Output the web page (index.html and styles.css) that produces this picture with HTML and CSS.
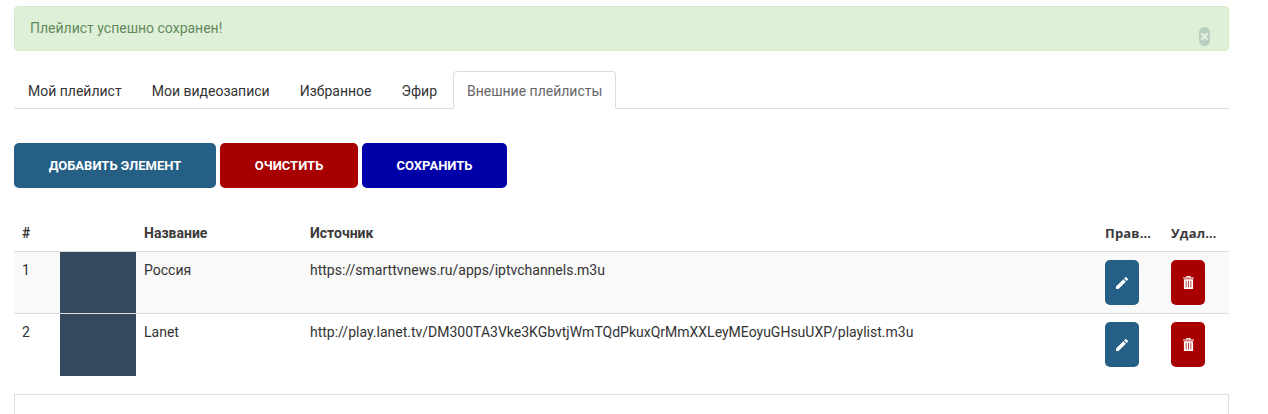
FILE: index.html
```html
<!DOCTYPE html>
<html>
<head>
  <meta charset="UTF-8">
  <title>Внешние плейлисты</title>
  <link rel="stylesheet" href="styles.css">
</head>
<body>
  <div class="container">
    <div class="alert">
      <span>Плейлист успешно сохранен!</span>
      <span class="alert-close">
        <svg viewBox="0 0 10 10" width="9" height="9"><path d="M1.5 1.5l7 7M8.5 1.5l-7 7" stroke="#e4f0e2" stroke-width="2.4"/></svg>
      </span>
    </div>

    <div class="tabs">
      <a class="tab">Мой плейлист</a>
      <a class="tab">Мои видеозаписи</a>
      <a class="tab">Избранное</a>
      <a class="tab">Эфир</a>
      <a class="tab active">Внешние плейлисты</a>
    </div>

    <div class="actions">
      <button class="btn btn-add">ДОБАВИТЬ ЭЛЕМЕНТ</button>
      <button class="btn btn-clear">ОЧИСТИТЬ</button>
      <button class="btn btn-save">СОХРАНИТЬ</button>
    </div>

    <table class="list">
      <colgroup>
        <col class="col-num">
        <col class="col-thumb">
        <col class="col-name">
        <col class="col-src">
        <col class="col-btn">
        <col class="col-btn">
      </colgroup>
      <thead>
        <tr>
          <th>#</th>
          <th></th>
          <th>Название</th>
          <th>Источник</th>
          <th class="alt">Правка</th>
          <th class="alt">Удаление</th>
        </tr>
      </thead>
      <tbody>
        <tr class="odd">
          <td>1</td>
          <td class="thumb"></td>
          <td>Россия</td>
          <td>https://smarttvnews.ru/apps/iptvchannels.m3u</td>
          <td><button class="icon-btn edit"><svg viewBox="0 0 24 24" width="16" height="16"><path fill="#fff" d="M3 17.25V21h3.75L17.81 9.94l-3.75-3.75L3 17.25zM20.71 7.04a1 1 0 0 0 0-1.41l-2.34-2.34a1 1 0 0 0-1.41 0l-1.83 1.83 3.75 3.75 1.83-1.83z"/></svg></button></td>
          <td><button class="icon-btn remove"><svg viewBox="0 0 12 14" width="11" height="13"><path fill="#fff" fill-rule="evenodd" d="M4 0h4l.6 1.5H12v1.2H0V1.500h3.400zM4.800 .9l-.2.600h2.800l-.2-.6zM1 3.500h10V14H1zM3 5v7.500h.8V5zm2.600 0v7.500h.8V5zm2.600 0v7.500H9V5z"/></svg></button></td>
        </tr>
        <tr>
          <td>2</td>
          <td class="thumb"></td>
          <td>Lanet</td>
          <td>http://play.lanet.tv/DM300TA3Vke3KGbvtjWmTQdPkuxQrMmXXLeyMEoyuGHsuUXP/playlist.m3u</td>
          <td><button class="icon-btn edit"><svg viewBox="0 0 24 24" width="16" height="16"><path fill="#fff" d="M3 17.25V21h3.750L17.810 9.940l-3.750-3.750L3 17.250zM20.710 7.040a1 1 0 0 0 0-1.410l-2.340-2.340a1 1 0 0 0-1.410 0l-1.830 1.830 3.750 3.750 1.830-1.830z"/></svg></button></td>
          <td><button class="icon-btn remove"><svg viewBox="0 0 12 14" width="11" height="13"><path fill="#fff" fill-rule="evenodd" d="M4 0h4l.6 1.5H12v1.200H0V1.500h3.400zM4.800 .9l-.2.600h2.800l-.2-.6zM1 3.500h10V14H1zM3 5v7.500h.8V5zm2.600 0v7.500h.8V5zm2.600 0v7.500H9V5z"/></svg></button></td>
        </tr>
      </tbody>
    </table>

    <div class="panel"></div>
  </div>
</body>
</html>
```

FILE: styles.css
```css
html, body {
  height: 100%;
}

body {
  margin: 0;
  font-family: Roboto, "Liberation Sans", sans-serif;
  font-size: 14px;
  color: #333;
  background: #fff;
  overflow: hidden;
}

.container {
  padding: 6px 39px 0 14px;
}

.alert {
  height: 45px;
  box-sizing: border-box;
  padding: 13px 15px 0;
  background: #dff0d8;
  border: 1px solid #d6e9c6;
  border-radius: 4px;
  color: #5f8a5c;
  font-size: 14px;
  line-height: 17px;
  display: flex;
  justify-content: space-between;
}

.alert-close {
  width: 11px;
  height: 19px;
  margin-top: 7px;
  margin-right: 3px;
  border-radius: 6px;
  background: #b9cfc0;
  display: flex;
  align-items: center;
  justify-content: center;
}

.tabs {
  display: flex;
  margin-top: 20px;
  height: 38px;
  box-sizing: border-box;
  border-bottom: 1px solid #ddd;
}

.tab {
  padding: 11px 13px 0;
  margin-right: 2px;
  height: 38px;
  box-sizing: border-box;
  line-height: 16px;
  color: #333;
  border: 1px solid transparent;
  border-radius: 4px 4px 0 0;
}

.tab.active {
  color: #666;
  background: #fff;
  border-color: #ddd #ddd #fff;
}

.actions {
  display: flex;
  gap: 4px;
  margin-top: 34px;
}

.btn {
  height: 45px;
  border: none;
  border-radius: 5px;
  color: #fff;
  font-family: Roboto, "Liberation Sans", sans-serif;
  font-size: 13px;
  font-weight: 700;
}

.btn-add {
  width: 202px;
  background: #255f85;
}

.btn-clear {
  width: 138px;
  background: #a80000;
}

.btn-save {
  width: 145px;
  background: #0000a8;
}

.list {
  width: 100%;
  margin-top: 26px;
  border-collapse: collapse;
  table-layout: fixed;
}

.col-num { width: 46px; }
.col-thumb { width: 76px; }
.col-name { width: 166px; }
.col-btn { width: 66px; }

.list th {
  height: 37px;
  padding: 0 8px;
  text-align: left;
  font-weight: 700;
  font-size: 14px;
  white-space: nowrap;
  overflow: hidden;
  text-overflow: ellipsis;
  color: #3a3a3a;
}

.list th.alt {
  font-family: "Open Sans", sans-serif;
  font-size: 13px;
  letter-spacing: .2px;
}

.list td {
  height: 61px;
  padding: 8px;
  vertical-align: top;
  line-height: 20px;
  border-top: 1px solid #ddd;
  box-sizing: border-box;
  color: #333;
}

.list tbody tr {
  height: 62px;
}

.list .odd {
  background: #f9f9f9;
}

.list td.thumb {
  padding: 0;
  background: #34495e;
  border-top-color: #ddd;
}

.icon-btn {
  width: 34px;
  height: 45px;
  padding: 0;
  border: none;
  border-radius: 5px;
  display: flex;
  align-items: center;
  justify-content: center;
}

.icon-btn.edit {
  background: #255f85;
}

.icon-btn.remove {
  background: #a80000;
}

.panel {
  margin-top: 18px;
  height: 60px;
  border: 1px solid #ddd;
}
```
